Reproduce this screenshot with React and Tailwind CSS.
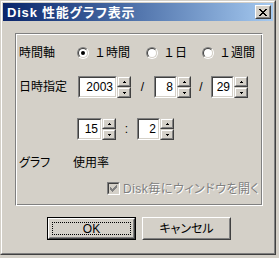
import React from 'react';

const font = "font-['Liberation_Sans','Noto_Sans_CJK_JP',sans-serif] [font-feature-settings:'palt']";

const Radio = ({ checked, label, className = '' }) => (
    <div className={`flex items-center ${className}`}>
        <div className="w-[12px] h-[12px] rounded-full border border-t-[#808080] border-l-[#808080] border-r-white border-b-white">
            <div className="w-full h-full rounded-full border border-t-[#404040] border-l-[#404040] border-r-[#d4d0c8] border-b-[#d4d0c8] bg-white flex items-center justify-center">
                {checked && <div className="w-[4px] h-[4px] rounded-full bg-black" />}
            </div>
        </div>
        <span className="ml-[5px] text-[12px] leading-none [font-feature-settings:normal]">{label}</span>
    </div>
);

const SpinBtn = ({ up }) => (
    <div className="flex-1 border border-t-[#d4d0c8] border-l-[#d4d0c8] border-r-[#404040] border-b-[#404040]">
        <div className="w-full h-full bg-[#d4d0c8] border border-t-white border-l-white border-r-[#808080] border-b-[#808080] flex items-center justify-center">
            <svg width="3" height="2" viewBox="0 0 3 2">
                {up ? <path d="M1 0h1v1h1v1H0V1h1z" fill="#000" /> : <path d="M0 0h3v1H2v1H1V1H0z" fill="#000" />}
            </svg>
        </div>
    </div>
);

const Spinner = ({ value, width }) => (
    <div className="flex h-[22px]">
        <div className={`${width} h-full border border-t-[#808080] border-l-[#808080] border-r-white border-b-white`}>
            <div className="w-full h-full border border-t-[#404040] border-l-[#404040] border-r-[#d4d0c8] border-b-[#d4d0c8] bg-white flex items-center justify-end pr-[2px] text-[12px] leading-none">
                {value}
            </div>
        </div>
        <div className="w-[14px] h-full flex flex-col">
            <SpinBtn up />
            <SpinBtn />
        </div>
    </div>
);

const Button = ({ label, isDefault }) => (
    <div className={`w-[89px] h-[23px] ${isDefault ? 'border border-black' : ''}`}>
        <div className="w-full h-full border border-t-white border-l-white border-r-[#404040] border-b-[#404040]">
            <div className="w-full h-full border border-t-[#d4d0c8] border-l-[#d4d0c8] border-r-[#808080] border-b-[#808080] flex items-center justify-center p-[2px]">
                <div className={`w-full h-full flex items-center justify-center text-[12px] leading-none ${isDefault ? 'border border-dotted border-black' : ''}`}>
                    {label}
                </div>
            </div>
        </div>
    </div>
);

export default function App() {
    return (
        <div className={`w-[279px] h-[258px] bg-[#d4d0c8] text-black ${font}`}>
            {/* Window frame */}
            <div className="w-[276px] h-[255px] border border-t-[#d4d0c8] border-l-[#d4d0c8] border-r-[#404040] border-b-[#404040]">
                <div className="w-full h-full border border-t-white border-l-white border-r-[#808080] border-b-[#808080] p-[1px] flex flex-col">
                    {/* Title bar */}
                    <div className="h-[18px] bg-gradient-to-r from-[#0a246a] to-[#a6caf0] flex items-center pl-[4px] pr-[2px]">
                        <span className="text-white font-bold text-[13px] leading-none tracking-[0.8px]">Disk 性能グラフ表示</span>
                        <div className="ml-auto w-[16px] h-[14px] border border-t-white border-l-white border-r-[#404040] border-b-[#404040]">
                            <div className="w-full h-full bg-[#d4d0c8] border border-t-[#d4d0c8] border-l-[#d4d0c8] border-r-[#808080] border-b-[#808080] flex items-center justify-center">
                                <svg width="8" height="7" viewBox="0 0 8 7">
                                    <path d="M0 0h2v1h1v1h2V1h1V0h2v1H7v1H6v1H5v1h1v1h1v1h1v1H6V6H5V5H3v1H2v1H0V6h1V5h1V4h1V3H2V2H1V1H0z" fill="#000" />
                                </svg>
                            </div>
                        </div>
                    </div>

                    {/* Body */}
                    <div className="flex-1 pl-[12px] pt-[12px]">
                        {/* Group box */}
                        <div className="w-[248px] h-[173px] border border-t-[#808080] border-l-[#808080] border-r-white border-b-white shadow-[inset_1px_1px_0_#fff,inset_-1px_-1px_0_#808080] pl-[3px] pt-[12px]">
                            <div className="flex items-center h-[13px]">
                                <span className="w-[58px] text-[12px] leading-none">時間軸</span>
                                <Radio checked label="１時間" className="w-[69px]" />
                                <Radio label="１日" className="w-[56px]" />
                                <Radio label="１週間" />
                            </div>

                            <div className="flex items-center mt-[17px]">
                                <span className="w-[59px] text-[12px] leading-none">日時指定</span>
                                <Spinner value="2003" width="w-[39px]" />
                                <span className="w-[23px] text-center text-[12px]">/</span>
                                <Spinner value="8" width="w-[23px]" />
                                <span className="w-[20px] text-center text-[12px]">/</span>
                                <Spinner value="29" width="w-[23px]" />
                            </div>

                            <div className="flex items-center mt-[20px] pl-[58px]">
                                <Spinner value="15" width="w-[25px]" />
                                <span className="w-[21px] text-center text-[12px]">:</span>
                                <Spinner value="2" width="w-[23px]" />
                            </div>

                            <div className="flex items-center mt-[16px] h-[13px]">
                                <span className="w-[54px] text-[12px] leading-none">グラフ</span>
                                <span className="text-[12px] leading-none">使用率</span>
                            </div>

                            <div className="flex items-center mt-[13px] pl-[88px]">
                                <div className="w-[13px] h-[13px] border border-t-[#808080] border-l-[#808080] border-r-white border-b-white">
                                    <div className="w-full h-full border border-t-[#404040] border-l-[#404040] border-r-[#d4d0c8] border-b-[#d4d0c8] bg-[#d4d0c8] flex items-center justify-center">
                                        <svg width="7" height="7" viewBox="0 0 7 7">
                                            <path d="M6 0h1v3H6v1H5v1H4v1H3v1H2V6H1V5H0V2h1v1h1v1h1V3h1V2h1V1h1z" fill="#808080" />
                                        </svg>
                                    </div>
                                </div>
                                <span className="ml-[3px] text-[12px] leading-none tracking-[0.5px] text-[#808080] [text-shadow:1px_1px_0_#fff]">Disk毎にウィンドウを開く</span>
                            </div>
                        </div>

                        {/* Buttons */}
                        <div className="flex gap-[6px] mt-[11px] pl-[32px]">
                            <Button label="OK" isDefault />
                            <Button label="キャンセル" />
                        </div>
                    </div>
                </div>
            </div>
        </div>
    );
}
